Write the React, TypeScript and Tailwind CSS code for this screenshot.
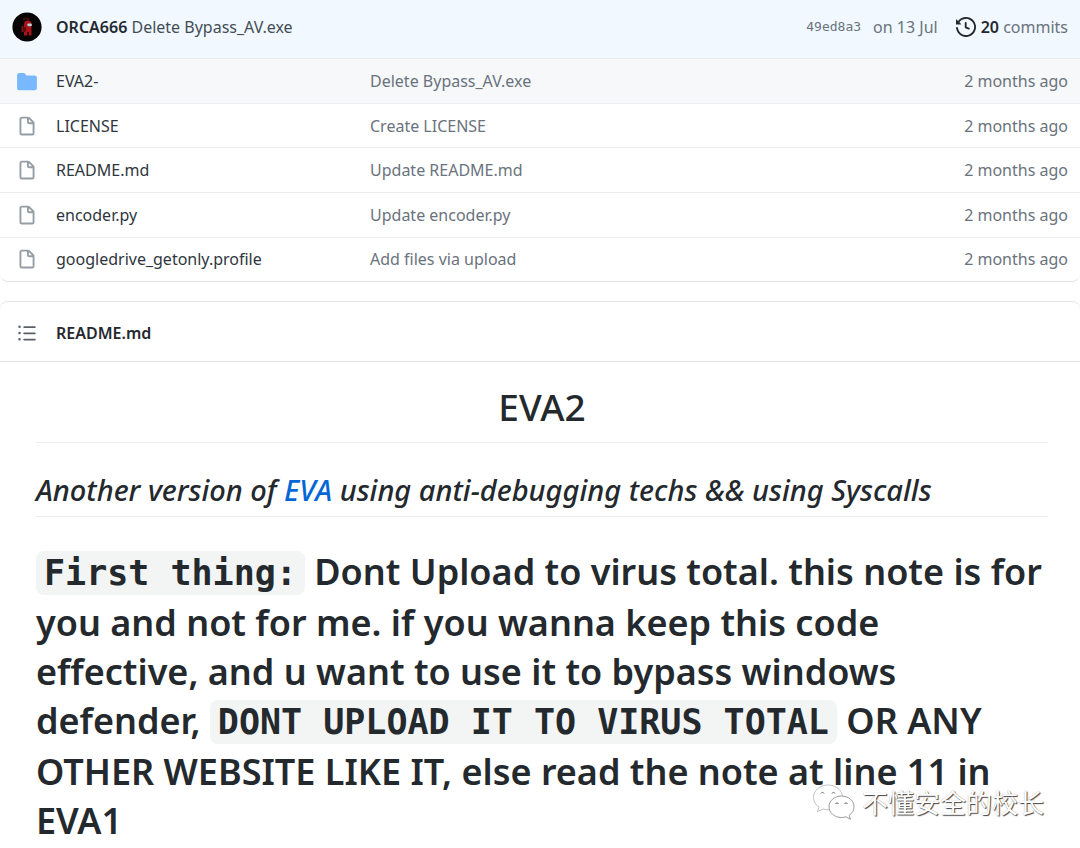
const files = [
  { name: "EVA2-", message: "Delete Bypass_AV.exe", folder: true },
  { name: "LICENSE", message: "Create LICENSE" },
  { name: "README.md", message: "Update README.md" },
  { name: "encoder.py", message: "Update encoder.py" },
  { name: "googledrive_getonly.profile", message: "Add files via upload" },
];

function FolderIcon() {
  return (
    <svg viewBox="0 0 16 16" className="mx-auto size-[22px] fill-[#79b8ff]" aria-hidden="true">
      <path d="M1.75 1A1.75 1.75 0 000 2.75v10.5C0 14.216.784 15 1.75 15h12.5A1.75 1.75 0 0016 13.25v-8.5A1.75 1.75 0 0014.25 3h-6.5a.25.25 0 01-.2-.1l-.9-1.2c-.33-.44-.85-.7-1.4-.7h-3.5z" transform="translate(.8 1.3) scale(.9)" />
    </svg>
  );
}

function FileIcon() {
  return (
    <svg viewBox="0 -0.5 16 16" className="mx-auto size-5 fill-[#959da5]" aria-hidden="true">
      <path
        fillRule="evenodd"
        d="M3.75 1.5a.25.25 0 00-.25.25v11.5c0 .138.112.25.25.25h8.5a.25.25 0 00.25-.25V6H9.75A1.75 1.75 0 018 4.25V1.5H3.75zm5.75.56v2.19c0 .138.112.25.25.25h2.19L9.5 2.06zM2 1.75C2 .784 2.784 0 3.75 0h5.086c.464 0 .909.184 1.237.513l3.414 3.414c.329.328.513.773.513 1.237v8.086A1.75 1.75 0 0112.25 15h-8.5A1.75 1.75 0 012 13.25V1.75z"
      />
    </svg>
  );
}

function HistoryIcon() {
  return (
    <svg viewBox="0 0 16 16" className="size-5 fill-[#24292e]" aria-hidden="true">
      <path
        fillRule="evenodd"
        d="M1.643 3.143L.427 1.927A.25.25 0 000 2.104V5.75c0 .138.112.25.25.25h3.646a.25.25 0 00.177-.427L2.715 4.215a6.5 6.5 0 11-1.18 4.458.75.75 0 10-1.493.154 8.001 8.001 0 101.6-5.684zM7.75 4a.75.75 0 01.75.75v2.992l2.028.812a.75.75 0 01-.557 1.392l-2.5-1A.75.75 0 017 8.25v-3.5A.75.75 0 017.75 4z"
      />
    </svg>
  );
}

function ListIcon() {
  return (
    <svg viewBox="0 0 16 16" className="size-5 fill-[#586069]" aria-hidden="true">
      <path
        fillRule="evenodd"
        d="M2 4a1 1 0 100-2 1 1 0 000 2zm3.75-1.5a.75.75 0 000 1.5h8.5a.75.75 0 000-1.5h-8.5zm0 5a.75.75 0 000 1.5h8.5a.75.75 0 000-1.5h-8.5zm0 5a.75.75 0 000 1.5h8.5a.75.75 0 000-1.5h-8.5zM3 8a1 1 0 11-2 0 1 1 0 012 0zm-1 6a1 1 0 100-2 1 1 0 000 2z"
      />
    </svg>
  );
}

function Avatar() {
  return (
    <svg viewBox="0 0 30 30" className="size-[30px]" role="img" aria-label="ORCA666">
      <circle cx="15" cy="15" r="14.6" fill="#050303" />
      <path d="M11 7.5c2-1 5-1 6.5.5" stroke="#5b0b10" strokeWidth="1.5" fill="none" />
      <path d="M9.5 14h2v6h-2z" fill="#7d1015" />
      <path d="M12 12c0-2.5 1.6-3.5 3.8-3.5s3.7 1.3 3.7 3.5v11.5h-2.7V20h-1.5v3.5H12z" fill="#a81219" />
      <path d="M11 16l3-1.5v5l-3 1z" fill="#5e0a0e" />
      <rect x="15.3" y="11.5" width="4.6" height="2.7" rx="1.3" fill="#b7d4dc" />
    </svg>
  );
}

function Watermark() {
  return (
    <div className="absolute right-9 bottom-10 flex items-center gap-[6px] whitespace-nowrap">
      <svg viewBox="0 0 44 38" className="h-[38px] w-11" fill="#fff" stroke="#9a9a9a" strokeWidth="1" aria-hidden="true">
        <path d="M16 2C8 2 1.5 7.5 1.5 14.5c0 4 2 7.2 5.5 9.5l-1.5 4.5L11 26c1.8.5 3.2.8 5 .8 8 0 14.5-5.3 14.5-12.3S24 2 16 2z" strokeOpacity=".6" />
        <path d="M29.5 13C22.5 13 17 17.7 17 23.7s5.5 10.8 12.5 10.8c1.5 0 3-.3 4.4-.7l4.6 2.5-1.3-4c3-2 4.8-5 4.8-8.6 0-6-5.5-10.7-12.5-10.7z" />
        <path d="M9 10.5c.5-1.5 2.5-1.5 3 0M20 10.5c.5-1.5 2.5-1.5 3 0M23.5 21c.5-1.5 2.5-1.5 3 0M32.5 21c.5-1.5 2.5-1.5 3 0" fill="none" stroke="#666" />
      </svg>
      <span className="font-['Noto_Sans_CJK_SC',sans-serif] text-[26px] leading-[26px] text-white [text-shadow:1px_1px_1px_#444,0_0_1px_#aaa]">
        不懂安全的校长
      </span>
    </div>
  );
}

export default function App() {
  return (
    <main className="relative overflow-hidden bg-white font-['Noto_Sans','Open_Sans',sans-serif] text-[16px] leading-6 text-[#24292e]">
      <section className="overflow-hidden rounded-b-lg border-b border-[#e1e4e8]">
        <header className="flex h-[58px] items-center bg-[#f1f8ff] pr-3 pb-1 pl-3">
          <Avatar />
          <p className="ml-[14px] flex-1">
            <a href="#author" className="font-semibold">ORCA666</a>{" "}
            <a href="#commit" className="text-[#444d56]">Delete Bypass_AV.exe</a>
          </p>
          <a href="#commit" className="font-['DejaVu_Sans_Mono',monospace] text-[13px] text-[#6a737d]">49ed8a3</a>
          <span className="ml-3 text-[#6a737d]">on 13 Jul</span>
          <a href="#commits" className="ml-[18px] flex items-center gap-[5px] text-[#6a737d]">
            <HistoryIcon />
            <span><strong className="font-semibold text-[#24292e]">20</strong> commits</span>
          </a>
        </header>
        <table className="h-[223px] w-full table-fixed border-collapse">
          <tbody>
            {files.map((file) => (
              <tr key={file.name} className="border-t border-[#eaecef] first:bg-[#f6f8fa]">
                <td className="w-[54px]">{file.folder ? <FolderIcon /> : <FileIcon />}</td>
                <td className="w-[316px] pl-[2px] text-[#2f363d]"><a href="#file">{file.name}</a></td>
                <td className="text-[#6a737d]"><a href="#message">{file.message}</a></td>
                <td className="w-[160px] pr-3 text-right text-[#6a737d]">2 months ago</td>
              </tr>
            ))}
          </tbody>
        </table>
      </section>

      <section className="mt-[19px] rounded-t-lg border-t border-[#e1e4e8]">
        <header className="flex h-[60px] items-center gap-[19px] border-b border-[#e1e4e8] pt-[2px] pl-[17px]">
          <button type="button" aria-label="Table of contents"><ListIcon /></button>
          <h2 className="font-semibold">README.md</h2>
        </header>
        <article className="px-8 pb-4 pl-9">
          <h1 className="mt-[21px] border-b border-[#eaecef] pb-[11px] text-center text-[37px] leading-[48px] font-medium">EVA2</h1>
          <h2 className="mt-[29px] border-b border-[#eaecef] pb-2 text-[29px] leading-9 font-medium whitespace-nowrap italic">
            Another version of <a href="#eva" className="text-[#0366d6]">EVA</a> using anti-debugging techs &amp;&amp; using Syscalls
          </h2>
          <h1 className="mt-[30px] text-[36px] leading-[49px] font-semibold whitespace-nowrap">
            <code className="rounded-lg bg-[#f3f4f4] px-2 py-[2px] font-['DejaVu_Sans_Mono',monospace] text-[35px] font-bold">First thing:</code> Dont Upload to virus total. this note is for<br />
            you and not for me. if you wanna keep this code<br />
            effective, and u want to use it to bypass windows<br />
            defender, <code className="rounded-lg bg-[#f3f4f4] px-2 py-[2px] font-['DejaVu_Sans_Mono',monospace] text-[35px] font-bold">DONT UPLOAD IT TO VIRUS TOTAL</code> OR ANY<br />
            OTHER WEBSITE LIKE IT, else read the note at line 11 in<br />
            EVA1
          </h1>
        </article>
      </section>
      <Watermark />
    </main>
  );
}
